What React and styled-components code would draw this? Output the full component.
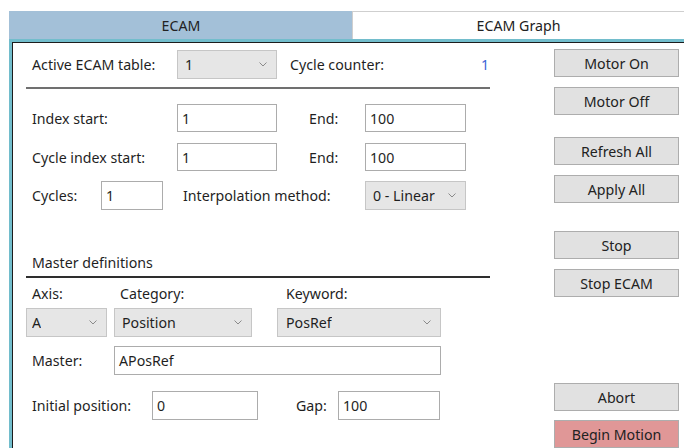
import React from 'react'
import styled, { createGlobalStyle } from 'styled-components'

const GlobalStyle = createGlobalStyle`
  body {
    margin: 0;
    background: #fff;
    font-family: "Noto Sans", "Open Sans", sans-serif;
    font-size: 14.2px;
    color: #1f1f1f;
  }
`

const Screen = styled.div`
  width: 684px;
  height: 448px;
  overflow: hidden;
  padding: 11px 0 0 9px;
  box-sizing: border-box;
  display: flex;
  flex-direction: column;
`
const TabStrip = styled.div`
  display: flex;
  height: 28px;
`
const Tab = styled.div`
  display: flex;
  align-items: center;
  justify-content: center;
  box-sizing: border-box;
  background: ${p => (p.$active ? '#a3c0d8' : '#fff')};
  border-top: 1px solid ${p => (p.$active ? '#a3c0d8' : '#cfcfcf')};
  border-left: 1px solid ${p => (p.$active ? '#a3c0d8' : '#cfcfcf')};
  width: ${p => (p.$active ? '343px' : 'auto')};
  flex: ${p => (p.$active ? 'none' : '1')};
  color: #222;
`
const Panel = styled.div`
  flex: 1;
  display: flex;
  border-top: 3px solid #72bdcc;
  border-left: 3px solid #72bdcc;
  box-shadow: inset 1px 1px 0 #1c1c1c;
  padding: 1px 0 0 1px;
`
const Form = styled.div`
  width: 528px;
  padding-left: 13px;
  display: flex;
  flex-direction: column;
`
const Row = styled.div`
  display: flex;
  align-items: center;
  height: ${p => p.$h || 29}px;
  margin-top: ${p => p.$mt || 0}px;
`
const Label = styled.span`
  box-sizing: border-box;
  width: ${p => p.$w}px;
  margin-left: ${p => p.$ml || 0}px;
  padding-left: ${p => (p.$pl === undefined ? 6 : p.$pl)}px;
  white-space: nowrap;
`
const Counter = styled.span`
  color: #3b63d6;
`
const Separator = styled.div`
  width: 464px;
  height: 2px;
  margin-top: ${p => p.$mt}px;
  background: ${p => p.$color};
`
const TextBox = styled.div`
  box-sizing: border-box;
  width: ${p => p.$w}px;
  height: ${p => p.$h || 28}px;
  margin-left: ${p => p.$ml || 0}px;
  border: 1px solid #acacac;
  background: #fff;
  padding-left: 4px;
  display: flex;
  align-items: center;
`
const Combo = styled.div`
  box-sizing: border-box;
  width: ${p => p.$w}px;
  height: 29px;
  margin-left: ${p => p.$ml || 0}px;
  border: 1px solid #c6c6c6;
  background: #e6e6e6;
  padding: 0 9px 0 ${p => p.$pl || 7}px;
  display: flex;
  align-items: center;
  justify-content: space-between;
  white-space: nowrap;
  overflow: hidden;
`
const ComboText = styled.span`
  overflow: hidden;
  max-width: ${p => (p.$clip ? `${p.$clip}px` : 'none')};
`
const ButtonColumn = styled.div`
  width: 125px;
  display: flex;
  flex-direction: column;
`
const Button = styled.div`
  box-sizing: border-box;
  height: 28px;
  margin-top: ${p => p.$mt}px;
  border: 1px solid #adadad;
  background: ${p => (p.$danger ? '#e09797' : '#e1e1e1')};
  display: flex;
  align-items: center;
  justify-content: center;
  color: #222;
`

const Chevron = () => (
  <svg width="8" height="5" viewBox="0 0 8 5" fill="none">
    <polyline points="0.5,0.5 4,4 7.5,0.5" stroke="#8a8a8a" strokeWidth="1" />
  </svg>
)

function ComboBox({ value, clip, ...rest }) {
  return (
    <Combo {...rest}>
      <ComboText $clip={clip}>{value}</ComboText>
      <Chevron />
    </Combo>
  )
}

const buttons = [
  { text: 'Motor On', mt: 6 },
  { text: 'Motor Off', mt: 10 },
  { text: 'Refresh All', mt: 22 },
  { text: 'Apply All', mt: 10 },
  { text: 'Stop', mt: 28 },
  { text: 'Stop ECAM', mt: 10 },
  { text: 'Abort', mt: 86 },
  { text: 'Begin Motion', mt: 9, danger: true }
]

export default function App() {
  return (
    <Screen>
      <GlobalStyle />
      <TabStrip>
        <Tab $active>ECAM</Tab>
        <Tab>ECAM Graph</Tab>
      </TabStrip>
      <Panel>
        <Form>
          <Row $mt={7}>
            <Label $w={151}>Active ECAM table:</Label>
            <ComboBox $w={100} value="1" />
            <Label $w={197} $ml={7}>Cycle counter:</Label>
            <Counter>1</Counter>
          </Row>
          <Separator $mt={8} $color="#707070" />
          <Row $mt={15} $h={28}>
            <Label $w={151}>Index start:</Label>
            <TextBox $w={100}>1</TextBox>
            <Label $w={62} $ml={26}>End:</Label>
            <TextBox $w={101}>100</TextBox>
          </Row>
          <Row $mt={11} $h={28}>
            <Label $w={151}>Cycle index start:</Label>
            <TextBox $w={100}>1</TextBox>
            <Label $w={62} $ml={26}>End:</Label>
            <TextBox $w={101}>100</TextBox>
          </Row>
          <Row $mt={10}>
            <Label $w={75}>Cycles:</Label>
            <TextBox $w={62} $h={29}>1</TextBox>
            <Label $w={188} $ml={14}>Interpolation method:</Label>
            <ComboBox $w={101} clip={64} value="0 - Linear" />
          </Row>
          <Row $mt={42} $h={20}>
            <Label $w={200}>Master definitions</Label>
          </Row>
          <Separator $mt={4} $color="#2e2e2e" />
          <Row $mt={5} $h={20}>
            <Label $w={88}>Axis:</Label>
            <Label $w={151} $ml={0}>Category:</Label>
            <Label $w={170} $ml={13} $pl={8}>Keyword:</Label>
          </Row>
          <Row $mt={5}>
            <ComboBox $w={81} $pl={5} value="A" />
            <ComboBox $w={138} $ml={7} value="Position" />
            <ComboBox $w={164} $ml={25} $pl={8} value="PosRef" />
          </Row>
          <Row $mt={9}>
            <Label $w={88}>Master:</Label>
            <TextBox $w={327} $h={29}>APosRef</TextBox>
          </Row>
          <Row $mt={16}>
            <Label $w={126}>Initial position:</Label>
            <TextBox $w={106} $h={29}>0</TextBox>
            <Label $w={42} $ml={38} $pl={0}>Gap:</Label>
            <TextBox $w={102} $h={29}>100</TextBox>
          </Row>
        </Form>
        <ButtonColumn>
          {buttons.map(b => (
            <Button key={b.text} $mt={b.mt} $danger={b.danger}>{b.text}</Button>
          ))}
        </ButtonColumn>
      </Panel>
    </Screen>
  )
}
